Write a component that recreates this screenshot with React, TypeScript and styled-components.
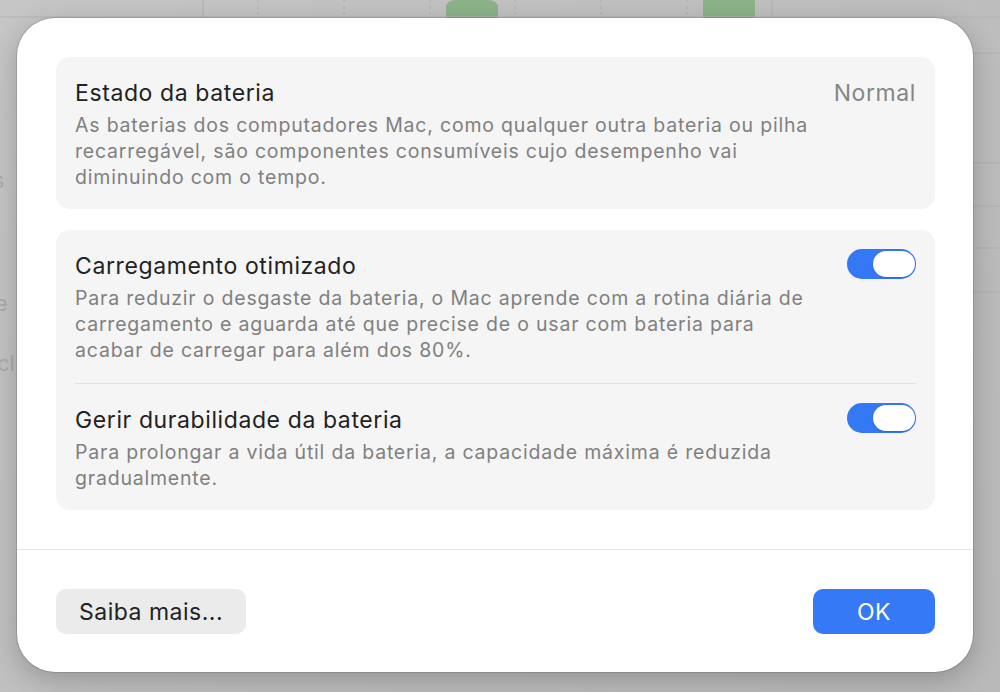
import React from "react";
import styled, { createGlobalStyle } from "styled-components";

const GlobalStyle = createGlobalStyle`
  html, body {
    margin: 0;
    padding: 0;
    background: #c2c2c2;
  }
  body {
    font-family: Inter, "Noto Sans", "Liberation Sans", sans-serif;
    -webkit-font-smoothing: antialiased;
  }
`;

const Stage = styled.div`
  position: relative;
  width: 1000px;
  height: 692px;
  overflow: hidden;
  background: linear-gradient(135deg, #c6c6c6 0%, #bdbdbd 60%, #b9b9b9 100%);
  padding: 18px 27px 0 17px;
  box-sizing: border-box;
`;

const Backdrop = styled.svg`
  position: absolute;
  inset: 0;
  width: 1000px;
  height: 692px;
`;

const Dialog = styled.div`
  position: relative;
  width: 956px;
  background: #ffffff;
  border-radius: 38px;
  box-shadow: 0 0 0 1px rgba(0, 0, 0, 0.12), 0 8px 28px rgba(0, 0, 0, 0.22);
  display: flex;
  flex-direction: column;
  overflow: hidden;
`;

const Body = styled.div`
  display: flex;
  flex-direction: column;
  gap: 21px;
  padding: 39px 38px 39px 39px;
`;

const Card = styled.section`
  background: #f5f5f5;
  border-radius: 14px;
  padding: 0 19px;
  display: flex;
  flex-direction: column;
`;

const Row = styled.div<{ $last?: boolean }>`
  display: flex;
  align-items: flex-start;
  gap: 20px;
  padding: 22px 0 ${(p) => (p.$last ? 19 : 20)}px;
`;

const Divider = styled.div`
  height: 1px;
  background: #e2e2e2;
`;

const TextCol = styled.div`
  flex: 1;
  display: flex;
  flex-direction: column;
  gap: 5px;
`;

const Title = styled.div`
  font-size: 23px;
  line-height: 28px;
  color: #222222;
  letter-spacing: 0.6px;
`;

const Description = styled.div`
  font-size: 19.5px;
  line-height: 26px;
  color: #808080;
  letter-spacing: 0.8px;
`;

const Value = styled.div`
  font-size: 23px;
  line-height: 28px;
  color: #858585;
  letter-spacing: 0.6px;
`;

const Toggle = styled.div<{ $on: boolean }>`
  flex: none;
  width: 69px;
  height: 30px;
  margin-top: -3px;
  border-radius: 15px;
  background: ${(p) => (p.$on ? "#3478f6" : "#dcdcdc")};
  display: flex;
  align-items: center;
  justify-content: ${(p) => (p.$on ? "flex-end" : "flex-start")};
  padding: 0 1px;
  box-sizing: border-box;
`;

const Knob = styled.div`
  width: 42px;
  height: 26px;
  border-radius: 13px;
  background: #ffffff;
  box-shadow: 0 0.5px 1.5px rgba(0, 0, 0, 0.25);
`;

const Separator = styled.div`
  height: 1px;
  background: #e4e4e4;
`;

const Footer = styled.div`
  display: flex;
  justify-content: space-between;
  align-items: center;
  padding: 39px 38px 38px 39px;
`;

const Button = styled.button<{ $primary?: boolean }>`
  height: 45px;
  border: none;
  border-radius: 10px;
  font-family: Inter, "Noto Sans", "Liberation Sans", sans-serif;
  font-size: 23px;
  letter-spacing: 0.5px;
  background: ${(p) => (p.$primary ? "#3579f6" : "#ebebeb")};
  color: ${(p) => (p.$primary ? "#ffffff" : "#222222")};
  width: ${(p) => (p.$primary ? "122px" : "190px")};
  padding: 0;
  cursor: default;
`;

const gridX = [258, 344, 430, 515, 601, 687];

export default function App() {
  return (
    <>
      <GlobalStyle />
      <Stage>
        <Backdrop viewBox="0 0 1000 692">
          <line x1="203" y1="0" x2="203" y2="20" stroke="#b2b2b2" strokeWidth="1" />
          <line x1="772" y1="0" x2="772" y2="20" stroke="#b2b2b2" strokeWidth="1" />
          {gridX.map((x) => (
            <line key={x} x1={x} y1="0" x2={x} y2="20" stroke="#b0b0b0" strokeWidth="1" strokeDasharray="3 3" />
          ))}
          <path d="M446 20 V8 Q446 0 456 0 H487 Q498 0 498 8 V20 Z" fill="#8cb38a" />
          <rect x="703" y="0" width="52" height="20" fill="#8cb38a" />
          {[53, 163, 206, 248, 292].map((y) => (
            <line key={y} x1="972" y1={y} x2="1000" y2={y} stroke="#b0b0b0" strokeWidth="1" />
          ))}
          <line x1="0" y1="17" x2="1000" y2="17" stroke="#b4b4b4" strokeWidth="1" />
          <g fill="#ababab" fontFamily="Inter, sans-serif" fontSize="22">
            <text x="-7" y="188">s</text>
            <text x="-5" y="311">e</text>
            <text x="-3" y="371">cl</text>
          </g>
        </Backdrop>
        <Dialog>
          <Body>
            <Card>
              <Row $last>
                <TextCol>
                  <Title>Estado da bateria</Title>
                  <Description>
                    As baterias dos computadores Mac, como qualquer outra bateria ou pilha
                    <br />
                    recarregável, são componentes consumíveis cujo desempenho vai
                    <br />
                    diminuindo com o tempo.
                  </Description>
                </TextCol>
                <Value>Normal</Value>
              </Row>
            </Card>
            <Card>
              <Row>
                <TextCol>
                  <Title>Carregamento otimizado</Title>
                  <Description>
                    Para reduzir o desgaste da bateria, o Mac aprende com a rotina diária de
                    <br />
                    carregamento e aguarda até que precise de o usar com bateria para
                    <br />
                    acabar de carregar para além dos 80%.
                  </Description>
                </TextCol>
                <Toggle $on>
                  <Knob />
                </Toggle>
              </Row>
              <Divider />
              <Row $last>
                <TextCol>
                  <Title>Gerir durabilidade da bateria</Title>
                  <Description>
                    Para prolongar a vida útil da bateria, a capacidade máxima é reduzida
                    <br />
                    gradualmente.
                  </Description>
                </TextCol>
                <Toggle $on>
                  <Knob />
                </Toggle>
              </Row>
            </Card>
          </Body>
          <Separator />
          <Footer>
            <Button>Saiba mais...</Button>
            <Button $primary>OK</Button>
          </Footer>
        </Dialog>
      </Stage>
    </>
  );
}
